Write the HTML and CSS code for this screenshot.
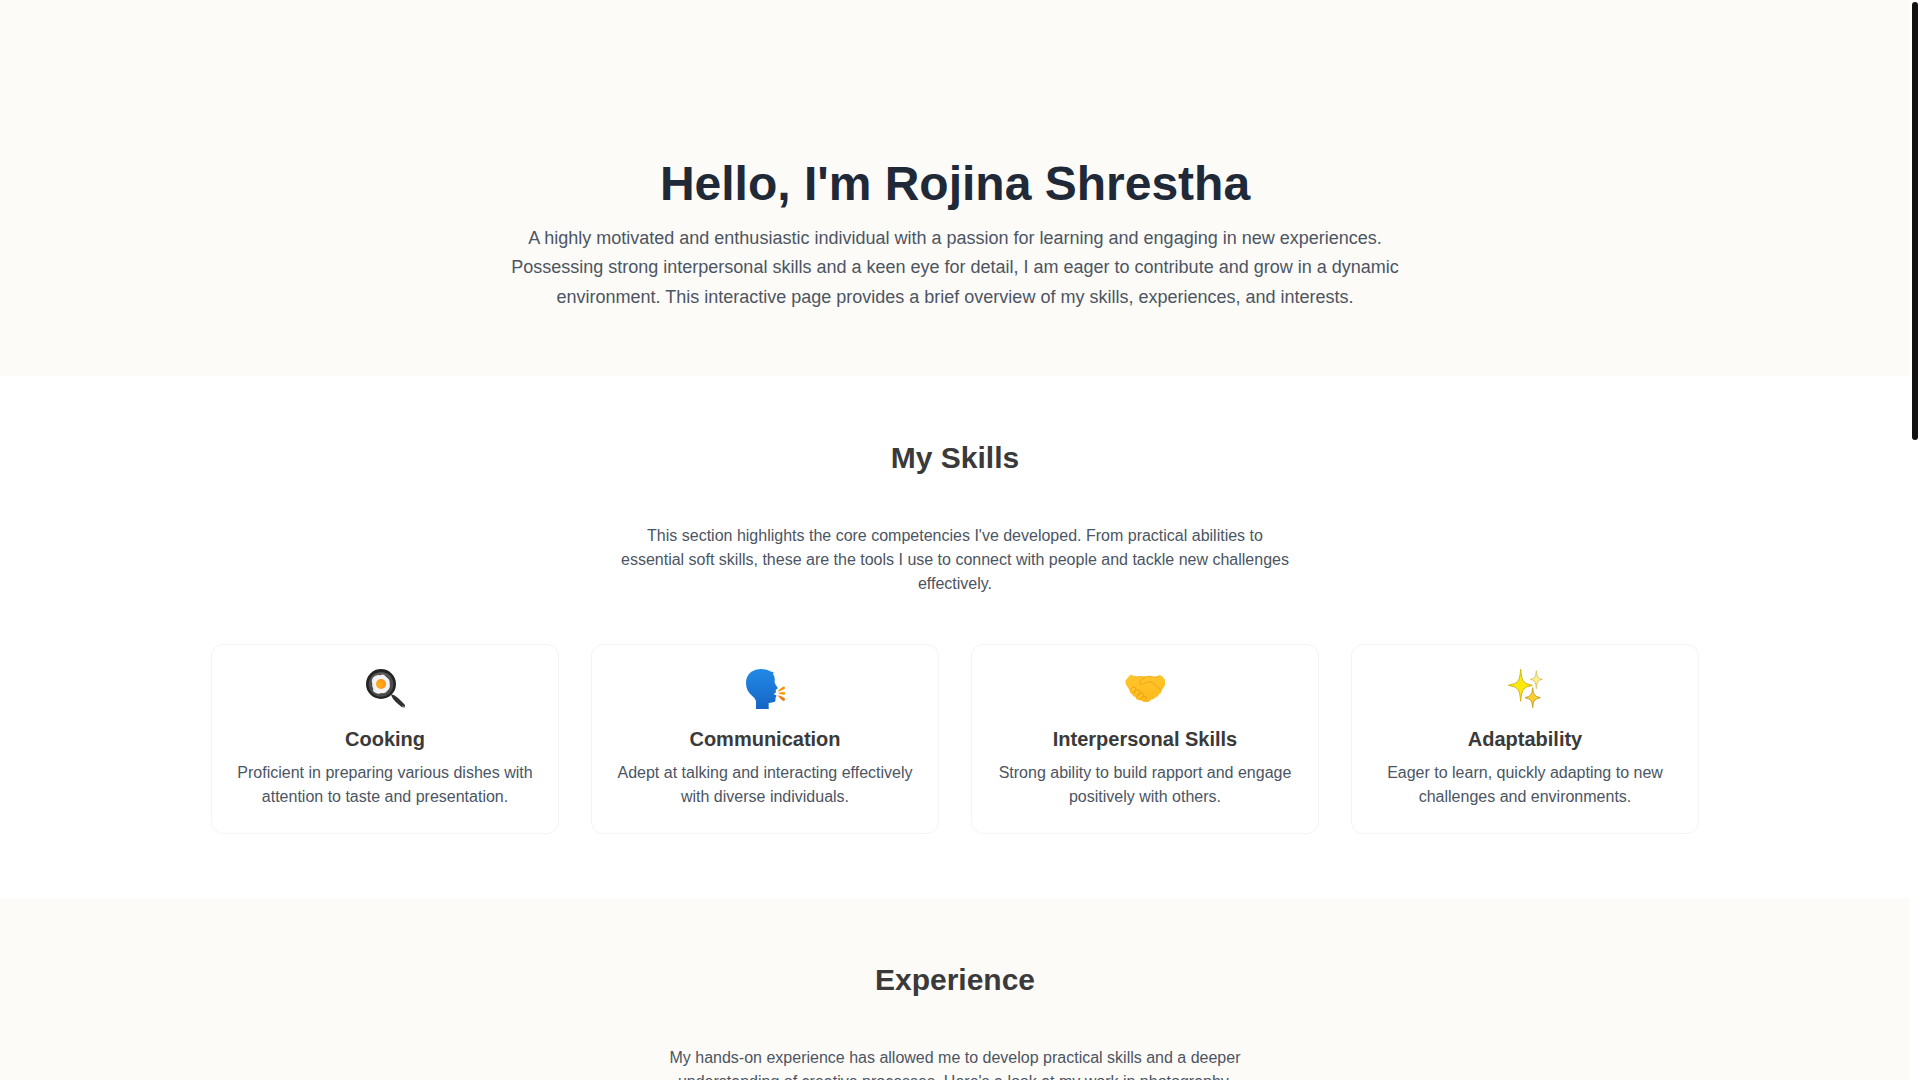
FILE: index.html
```html
<!DOCTYPE html>
<html lang="en">
  <head>
    <meta charset="UTF-8" />
    <meta name="viewport" content="width=device-width, initial-scale=1.0" />
    <title>Rojina Shrestha</title>
    <link rel="stylesheet" href="styles.css">
  </head>
  <body>
    <main class="page">
      <section class="hero">
        <h1 class="hero-title">Hello, I'm Rojina Shrestha</h1>
        <p class="hero-text">
          A highly motivated and enthusiastic individual with a passion for
          learning and engaging in new experiences. Possessing strong
          interpersonal skills and a keen eye for detail, I am eager to
          contribute and grow in a dynamic environment. This interactive page
          provides a brief overview of my skills, experiences, and interests.
        </p>
      </section>

      <section id="skills" class="section section-white">
        <h2 class="section-title">My Skills</h2>
        <p class="section-text">
          This section highlights the core competencies I've developed. From
          practical abilities to essential soft skills, these are the tools I
          use to connect with people and tackle new challenges effectively.
        </p>
        <div class="skills-grid">
          <div class="card">
            <svg class="card-icon" viewBox="45 42 120 120" aria-hidden="true">
              <defs>
                <radialGradient id="yolk" cx="0.3" cy="0.6" r="0.8">
                  <stop offset="0" stop-color="#ffb416" />
                  <stop offset="1" stop-color="#ff8a1c" />
                </radialGradient>
              </defs>
              <path d="M124 118 Q134 120 145 130 L163 148 Q168 154 164 156 Q160 159 154 155 L138 142 Q128 132 124 122Z" fill="#303030" />
              <path d="M157 153 L164 156" stroke="#888" stroke-width="3" stroke-linecap="round" />
              <circle cx="93" cy="87" r="45" fill="#242424" />
              <circle cx="93" cy="88" r="37" fill="#4c4c4c" />
              <path d="M65 70 A37 37 0 0 1 121 66" fill="none" stroke="#626262" stroke-width="4" />
              <path d="M72 65 Q82 57 91 61 Q100 55 108 65 Q121 73 119 86 Q122 98 112 107 Q105 117 94 114 Q83 119 74 112 Q67 108 70 101 Q64 94 67 86 Q62 74 72 65Z" fill="#f4f4f6" />
              <path d="M70 72 Q67 82 71 95 Q72 107 80 109" fill="none" stroke="#dcdcdc" stroke-width="2" />
              <circle cx="93" cy="87" r="15" fill="url(#yolk)" />
            </svg>
            <h3 class="card-title">Cooking</h3>
            <p class="card-text">
              Proficient in preparing various dishes with attention to taste
              and presentation.
            </p>
          </div>

          <div class="card">
            <svg class="card-icon" viewBox="45 42 120 120" aria-hidden="true">
              <defs>
                <linearGradient id="head" x1="0" y1="0" x2="0" y2="1">
                  <stop offset="0" stop-color="#2389e6" />
                  <stop offset="1" stop-color="#1565c5" />
                </linearGradient>
              </defs>
              <path d="M91 42 Q110 42 124 50 L131 51 L129 57 Q136 66 134 77 Q133 83 137 89 L143 98 Q144 103 137 104 L138 112 L131 118 L139 121 Q140 126 136 129 Q139 140 130 142 L116 144 L116 162 L78 162 L78 138 Q77 130 66 122 Q48 108 48 84 Q48 62 64 50 Q76 42 91 42Z" fill="url(#head)" />
              <path d="M145 109 Q147 103 160 96 Q164 94 164 100 Q163 103 145 109Z" fill="#f59208" stroke="#f59208" stroke-width="2" />
              <path d="M144 115 Q153 110 163 111 Q168 115 163 119 Q152 120 144 115Z" fill="#f99d0c" />
              <path d="M145 122 Q161 126 164 131 Q165 137 161 137 Q152 133 145 122Z" fill="#ea790f" stroke="#ea790f" stroke-width="2" />
            </svg>
            <h3 class="card-title">Communication</h3>
            <p class="card-text">
              Adept at talking and interacting effectively with diverse
              individuals.
            </p>
          </div>

          <div class="card">
            <svg class="card-icon" viewBox="45 42 120 120" aria-hidden="true">
              <defs>
                <linearGradient id="hand" x1="0" y1="0" x2="0" y2="1">
                  <stop offset="0" stop-color="#ffc52c" />
                  <stop offset="1" stop-color="#fdba1b" />
                </linearGradient>
              </defs>
              <path d="M48 75 L59 61 Q65 58 72 63 L82 65 Q94 61 106 65 Q119 60 131 65 Q143 65 149 61 Q153 59 158 65 L166 76 Q168 82 164 92 L154 107 Q156 116 146 118 Q145 126 136 127 Q132 135 124 133 Q117 145 108 140 Q101 143 96 137 L82 134 Q76 132 78 126 Q67 125 68 118 Q57 116 60 107 L49 91 Q44 82 48 75Z" fill="url(#hand)" />
              <path d="M98 67 Q118 62 131 66 Q142 68 149 63 M73 65 Q83 68 94 64" fill="none" stroke="#eba41a" stroke-width="2" />
              <path d="M107 67 Q97 70 90 80 Q86 88 94 88 Q103 88 111 81 Q121 76 132 86 Q142 97 154 105" fill="none" stroke="#e39812" stroke-width="2" stroke-linejoin="round" />
              <path d="M60 107 Q65 96 72 97 Q81 98 76 106 L68 118 M73 111 Q81 101 88 106 Q92 111 86 118 L78 127 M84 121 Q91 112 99 115 Q103 120 98 127 L90 134 M96 128 Q103 121 109 126 Q111 132 105 137" fill="none" stroke="#e39812" stroke-width="2" stroke-linejoin="round" />
              <path d="M64 105 Q68 99 73 102 M78 114 Q82 107 87 110 M89 124 Q94 117 98 120" fill="none" stroke="#ffd34b" stroke-width="2" />
            </svg>
            <h3 class="card-title">Interpersonal Skills</h3>
            <p class="card-text">
              Strong ability to build rapport and engage positively with
              others.
            </p>
          </div>

          <div class="card">
            <svg class="card-icon" viewBox="45 42 120 120" aria-hidden="true">
              <path d="M92 43 Q94 72 101 80 Q106 87 127 91 Q106 95 101 102 Q94 110 92 139 Q90 110 83 102 Q78 95 55 91 Q78 87 83 80 Q90 72 92 43Z" fill="#ffe90d" stroke="#d2b612" stroke-width="3" />
              <path d="M139 47 Q140 63 144 68 Q147 71 157 73 Q147 75 144 79 Q140 84 139 101 Q138 84 134 79 Q131 75 121 73 Q131 71 134 68 Q138 63 139 47Z" fill="#fff18a" stroke="#dac772" stroke-width="3" />
              <path d="M128 98 Q129 115 134 120 Q138 125 151 128 Q138 131 134 135 Q129 141 128 158 Q127 141 122 135 Q118 131 105 128 Q118 125 122 120 Q127 115 128 98Z" fill="#fdd02d" stroke="#cfa030" stroke-width="3" />
            </svg>
            <h3 class="card-title">Adaptability</h3>
            <p class="card-text">
              Eager to learn, quickly adapting to new challenges and
              environments.
            </p>
          </div>
        </div>
      </section>

      <section id="experience" class="section">
        <h2 class="section-title">Experience</h2>
        <p class="section-text">
          My hands-on experience has allowed me to develop practical skills and
          a deeper understanding of creative processes. Here's a look at my
          work in photography.
        </p>
      </section>
    </main>

    <div class="scrollbar" aria-hidden="true">
      <div class="scrollbar-thumb"></div>
    </div>
  </body>
</html>
```

FILE: styles.css
```css
* {
  box-sizing: border-box;
}

body {
  margin: 0;
  height: 100vh;
  overflow: hidden;
  display: flex;
  background-color: #ffffff;
  color: #3a3a3a;
  font-family: "Liberation Sans", Arial, sans-serif;
  font-size: 16px;
  line-height: 24px;
}

h1,
h2,
h3,
p {
  margin: 0;
}

.page {
  flex: 1;
  overflow: hidden;
  background-color: #fdfbf7;
}

/* Hero */
.hero {
  padding: 160px 24px 64px;
  text-align: center;
}

.hero-title {
  margin-bottom: 16px;
  color: #1f2937;
  font-size: 48px;
  line-height: 48px;
}

.hero-text {
  max-width: 896px;
  margin: 0 auto;
  color: #4b5563;
  font-size: 18px;
  line-height: 1.625;
}

/* Sections */
.section {
  padding: 64px 24px;
  text-align: center;
}

.section-white {
  background-color: #ffffff;
}

.section-title {
  margin-bottom: 48px;
  font-size: 30px;
  line-height: 36px;
}

.section-text {
  max-width: 672px;
  margin: 0 auto 48px;
  color: #4b5563;
}

/* Skill cards */
.skills-grid {
  display: grid;
  grid-template-columns: repeat(4, 1fr);
  gap: 32px;
  max-width: 1488px;
  margin: 0 auto;
}

.card {
  padding: 24px;
  border: 1px solid #f3f4f6;
  border-radius: 12px;
  background-color: #ffffff;
}

.card-icon {
  display: block;
  width: 40px;
  height: 40px;
  margin: 0 auto 16px;
}

.card-title {
  margin-bottom: 8px;
  font-size: 20px;
  line-height: 28px;
}

.card-text {
  color: #4b5563;
}

/* Scrollbar */
.scrollbar {
  width: 10px;
  padding: 2px;
}

.scrollbar-thumb {
  height: 438px;
  border-radius: 3px;
  background-color: #111111;
}

@media (max-width: 1024px) {
  .skills-grid {
    grid-template-columns: repeat(2, 1fr);
  }
}
```
